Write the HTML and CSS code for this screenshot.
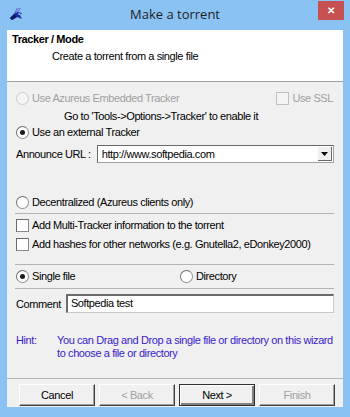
FILE: index.html
```html
<!DOCTYPE html>
<html>
<head>
<meta charset="utf-8">
<link rel="stylesheet" href="styles.css">
</head>
<body>
<div class="window">
  <div class="titlebar">
    <svg class="appicon" width="14" height="14" viewBox="0 0 14 14">
      <path d="M8 1 L12 1 L9 5 L13 6 L11 8 L13 12 L8 10 L3 13 L1 11 L5 7 Z" fill="#1c2fa6"/>
      <path d="M8 1 L12 1 L9 5 L6 6 Z" fill="#7d92e6"/>
      <path d="M5 7 L8 10 L3 13 L1 11 Z" fill="#0b1a6a"/>
      <path d="M9 6 L12 7 L10 8 Z" fill="#e8ecff"/>
    </svg>
    <div class="title">Make a torrent</div>
    <div class="close">✕</div>
  </div>
  <div class="client">
    <div class="header">
      <div class="h-title">Tracker / Mode</div>
      <div class="h-sub">Create a torrent from a single file</div>
    </div>
    <div class="body">
      <div class="row r1">
        <label class="opt disabled"><span class="radio"></span>Use Azureus Embedded Tracker</label>
        <label class="opt disabled ssl"><span class="check"></span>Use SSL</label>
      </div>
      <div class="row r2 note">Go to 'Tools-&gt;Options-&gt;Tracker' to enable it</div>
      <div class="row r3">
        <label class="opt"><span class="radio on"></span>Use an external Tracker</label>
      </div>
      <div class="row r4">
        <span class="lbl">Announce URL :</span>
        <div class="combo">
          <span class="combo-text">http://www.softpedia.com</span>
          <span class="combo-btn"><svg width="7" height="4" viewBox="0 0 7 4"><path d="M0 0 H7 L3.5 4 Z" fill="#000"/></svg></span>
        </div>
      </div>
      <div class="row r5">
        <label class="opt"><span class="radio"></span>Decentralized (Azureus clients only)</label>
      </div>
      <div class="sep s1"></div>
      <div class="row r6">
        <label class="opt"><span class="check"></span>Add Multi-Tracker information to the torrent</label>
      </div>
      <div class="row r7">
        <label class="opt"><span class="check"></span>Add hashes for other networks (e.g. Gnutella2, eDonkey2000)</label>
      </div>
      <div class="sep s2"></div>
      <div class="row r8">
        <div class="half"><label class="opt"><span class="radio on"></span>Single file</label></div>
        <label class="opt"><span class="radio"></span>Directory</label>
      </div>
      <div class="sep s3"></div>
      <div class="row r9">
        <span class="lbl">Comment</span>
        <div class="input">Softpedia test</div>
      </div>
      <div class="hint">
        <span class="hint-lbl">Hint:</span>
        <span class="hint-text">You can Drag and Drop a single file or directory on this wizard to choose a file or directory</span>
      </div>
      <div class="sep s4"></div>
      <div class="buttons">
        <div class="btn">Cancel</div>
        <div class="btn dis">&lt; Back</div>
        <div class="btn def">Next &gt;</div>
        <div class="btn dis">Finish</div>
      </div>
    </div>
  </div>
</div>
</body>
</html>
```

FILE: styles.css
```css
html, body {
  margin: 0;
  padding: 0;
}
body {
  width: 350px;
  height: 417px;
  overflow: hidden;
  font-family: "Liberation Sans", Arial, sans-serif;
  font-size: 11px;
  letter-spacing: -0.4px;
  color: #000;
}
.window {
  width: 350px;
  height: 417px;
  background: #8ac3f3;
  display: flex;
  flex-direction: column;
  position: relative;
}
.titlebar {
  height: 30px;
  display: flex;
  align-items: center;
  justify-content: center;
  position: relative;
}
.appicon {
  position: absolute;
  left: 9px;
  top: 7px;
}
.title {
  font-family: "Open Sans", "Noto Sans", sans-serif;
  font-size: 13px;
  letter-spacing: 0;
  color: #1e1e1e;
  margin-top: -2px;
}
.close {
  position: absolute;
  right: 6px;
  top: 1px;
  width: 26px;
  height: 19px;
  background: #c75050;
  color: #fff;
  font-size: 10px;
  font-weight: bold;
  letter-spacing: 0;
  display: flex;
  align-items: center;
  justify-content: center;
}
.client {
  margin: 0 7px;
  width: 336px;
  height: 377px;
  background: #f0f0f0;
  display: flex;
  flex-direction: column;
}
.header {
  height: 52px;
  background: #fff;
  border-bottom: 1px solid #a0a0a0;
  box-sizing: border-box;
  padding-left: 5px;
  padding-top: 1px;
}
.h-title {
  font-weight: bold;
  height: 14px;
  line-height: 14px;
  margin-top: 1px;
}
.h-sub {
  margin-left: 40px;
  margin-top: 3px;
  line-height: 14px;
}
.body {
  padding: 0 8px 0 9px;
  display: flex;
  flex-direction: column;
}
.row {
  height: 16px;
  display: flex;
  align-items: center;
  white-space: nowrap;
}
.opt {
  display: flex;
  align-items: center;
}
.opt.disabled {
  color: #a0a0a0;
}
.ssl {
  margin-left: auto;
  margin-right: 2px;
}
.half {
  width: 164px;
  flex: none;
}
.radio {
  width: 11px;
  height: 11px;
  border: 1px solid #8e8e8e;
  border-top-color: #6e6e6e;
  border-left-color: #6e6e6e;
  border-radius: 50%;
  background: #fff;
  margin-right: 3px;
  position: relative;
  flex: none;
}
.radio.on::after {
  content: "";
  position: absolute;
  left: 3px;
  top: 3px;
  width: 5px;
  height: 5px;
  border-radius: 50%;
  background: #1a1a1a;
}
.disabled .radio {
  border-color: #c8c8c8;
  background: #f4f4f4;
}
.check {
  width: 11px;
  height: 11px;
  border: 1px solid #8a8a8a;
  border-top-color: #6a6a6a;
  border-left-color: #6a6a6a;
  background: #fff;
  margin-right: 3px;
  flex: none;
}
.disabled .check {
  border-color: #c0c0c0;
  background: #f4f4f4;
}
.r1 { margin-top: 8px; }
.r2 { margin-top: 2px; padding-left: 48px; }
.r3 { margin-top: 0; }
.r4 { margin-top: 5px; height: 18px; }
.r5 { margin-top: 31px; }
.r6 { margin-top: 3px; }
.r7 { margin-top: 3px; }
.r8 { margin-top: 3px; }
.r9 { margin-top: 5px; height: 19px; }
.sep {
  height: 1px;
  background: #b4b4b4;
  margin-left: -1px;
  margin-right: 1px;
}
.s1 { margin-top: 3px; }
.s2 { margin-top: 12px; }
.s3 { margin-top: 4px; }
.s4 { margin-top: 18px; margin-left: -9px; margin-right: -8px; }
.lbl {
  margin-right: 6px;
}
.combo {
  flex: 1;
  height: 18px;
  box-sizing: border-box;
  background: #fff;
  border: 1px solid #a0a0a0;
  border-top-color: #696969;
  border-left-color: #696969;
  display: flex;
  align-items: center;
  padding-left: 4px;
  margin-right: 1px;
}
.combo-text {
  flex: 1;
}
.combo-btn {
  width: 14px;
  height: 14px;
  background: #f0f0f0;
  border-right: 1px solid #696969;
  border-bottom: 1px solid #696969;
  box-sizing: border-box;
  display: flex;
  align-items: center;
  justify-content: center;
  margin-right: 1px;
}
.input {
  flex: 1;
  height: 19px;
  box-sizing: border-box;
  background: #fff;
  border: 1px solid #c8c8c8;
  border-top: 2px solid #6b6b6b;
  border-left: 2px solid #6b6b6b;
  padding-left: 3px;
  line-height: 15px;
  margin-left: -1px;
  margin-right: 1px;
}
.hint {
  margin-top: 21px;
  display: flex;
  color: #3a1ccc;
  line-height: 13px;
}
.hint-lbl {
  width: 41px;
  flex: none;
}
.hint-text {
  width: 278px;
}
.buttons {
  margin-top: 5px;
  display: flex;
  gap: 4px;
  padding-left: 3px;
}
.btn {
  width: 77px;
  height: 22px;
  box-sizing: border-box;
  background: #f0f0f0;
  border: 1px solid;
  border-color: #fff #404040 #404040 #fff;
  box-shadow: inset -1px -1px 0 #a0a0a0;
  display: flex;
  align-items: center;
  justify-content: center;
}
.btn.dis {
  color: #a0a0a0;
}
.btn.def {
  outline: 1px solid #303030;
  outline-offset: -1px;
  border-color: #303030;
  box-shadow: inset 1px 1px 0 #fff, inset -2px -2px 0 #808080;
}
```
